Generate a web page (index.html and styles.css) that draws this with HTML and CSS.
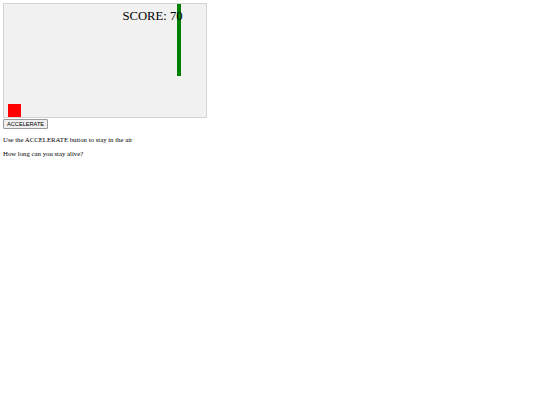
FILE: index.html
```html
<!DOCTYPE html>
<html>
<head>
<meta charset="utf-8">
<link rel="stylesheet" href="styles.css">
</head>
<body>
<div class="game">
  <div class="obstacle"></div>
  <span class="score">SCORE: 70</span>
  <div class="piece"></div>
</div>
<button class="accel">ACCELERATE</button>
<p class="note">Use the ACCELERATE button to stay in the air</p>
<p class="note">How long can you stay alive?</p>
</body>
</html>
```
FILE: styles.css
```css
body {
  margin: 3px;
  font-family: "Liberation Serif", "Times New Roman", serif;
  font-size: 6.77px;
  background: #fff;
  color: #000;
}
.game {
  position: relative;
  width: 202px;
  height: 113px;
  border: 1px solid #d3d3d3;
  background: #f1f1f1;
  margin-bottom: 1px;
  overflow: hidden;
}
.obstacle {
  position: absolute;
  left: 173px;
  top: 0;
  width: 4.2px;
  height: 72px;
  background: #008000;
}
.score {
  position: absolute;
  left: 118.4px;
  top: 6.2px;
  font-family: "Liberation Serif", serif;
  font-size: 12.7px;
  line-height: 12.7px;
  color: #000;
  white-space: nowrap;
}
.piece {
  position: absolute;
  left: 4.2px;
  top: 100.3px;
  width: 12.7px;
  height: 12.7px;
  background: #ff0000;
}
.accel {
  display: block;
  margin: 0;
  font-family: "Liberation Sans", Arial, sans-serif;
  font-size: 5.64px;
  line-height: normal;
  padding: 1px 3px;
  border: 1px solid #9a9a9a;
  border-radius: 1px;
  background: #efefef;
  color: #000;
}
.note {
  margin: 6.77px 0;
}
```
